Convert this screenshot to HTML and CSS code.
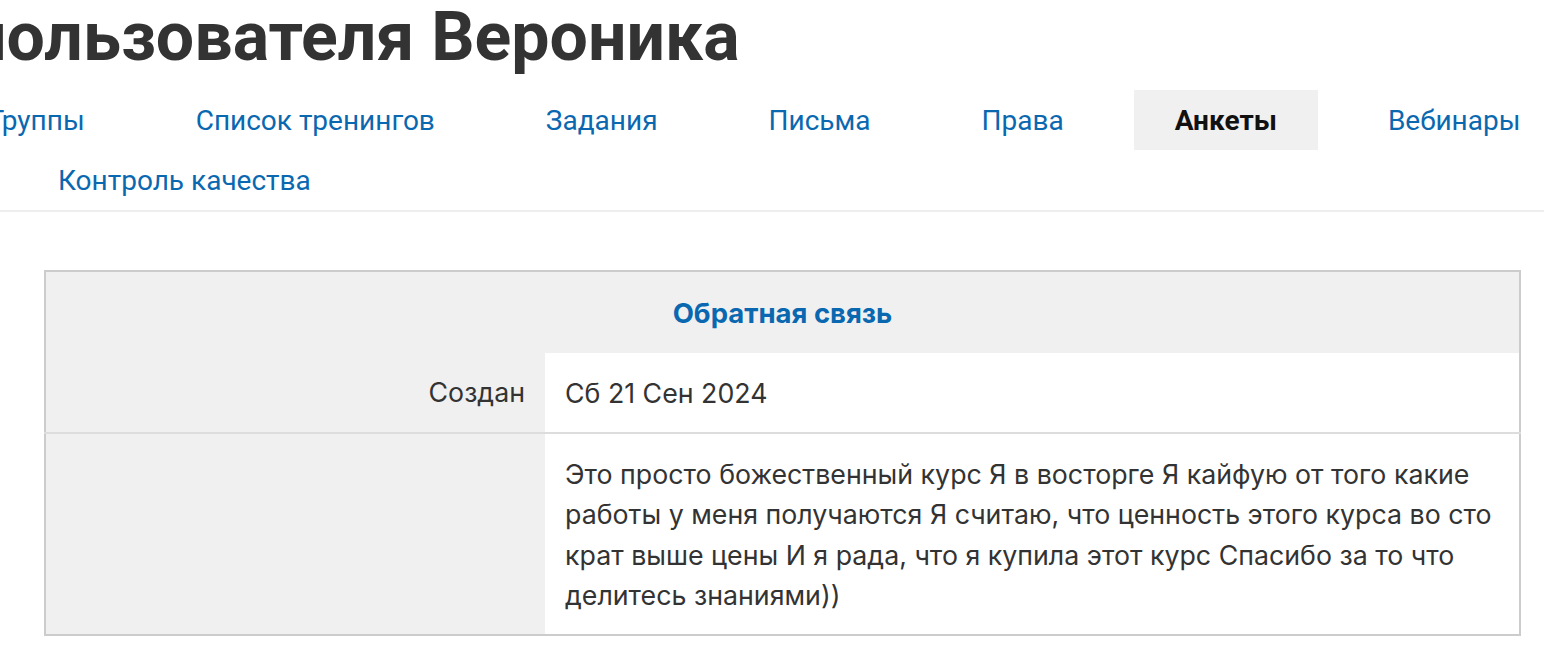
FILE: index.html
```html
<!DOCTYPE html>
<html>
<head>
<meta http-equiv="Content-Type" content="text/html; charset=utf-8"/>
<title>Анкета пользователя Вероника</title>
<link rel="stylesheet" href="styles.css">
</head>
<body>

<h1 class="page-title">пользователя Вероника</h1>

<div class="tabs">
  <div class="tabs-row first">
    <a class="tab" href="#">Группы</a>
    <a class="tab" href="#">Список тренингов</a>
    <a class="tab" href="#">Задания</a>
    <a class="tab" href="#">Письма</a>
    <a class="tab" href="#">Права</a>
    <span class="tab active">Анкеты</span>
    <a class="tab" href="#">Вебинары</a>
  </div>
  <div class="tabs-row second">
    <a class="tab" href="#">Контроль качества</a>
  </div>
</div>

<div class="content">
  <table class="form-table">
    <tr>
      <th colspan="2" class="form-head"><a href="#">Обратная связь</a></th>
    </tr>
    <tr>
      <td class="label">Создан</td>
      <td class="value">Сб 21 Сен 2024</td>
    </tr>
    <tr class="last">
      <td class="label"></td>
      <td class="value">Это просто божественный курс Я в восторге Я кайфую от того какие работы у меня получаются Я считаю, что ценность этого курса во сто крат выше цены И я рада, что я купила этот курс Спасибо за то что делитесь знаниями))</td>
    </tr>
  </table>
</div>

</body>
</html>
```

FILE: styles.css
```css
html, body {
  margin: 0;
  padding: 0;
  background: white;
  overflow: hidden;
}

body {
  font-family: Roboto, "Liberation Sans", sans-serif;
  color: #333;
}

a {
  color: #0a68b0;
  text-decoration: none;
}

.page-title {
  margin: 0 0 0 -32px;
  height: 90px;
  line-height: 74px;
  font-size: 68px;
  font-weight: bold;
  color: #333;
  white-space: nowrap;
}

.tabs {
  border-bottom: 2px solid #eee;
}

.tabs-row {
  display: flex;
  white-space: nowrap;
}
.tabs-row.first {
  margin-left: -52px;
}
.tabs-row.second {
  margin-left: 17px;
}

.tab {
  display: block;
  height: 60px;
  line-height: 62px;
  padding: 0 41px;
  margin-right: 29px;
  font-size: 28px;
}

.tab.active {
  background: #f0f0f0;
  color: #111;
  font-weight: bold;
}

.content {
  padding: 58px 23px 0 44px;
}

.form-table {
  width: 100%;
  border-collapse: collapse;
  border: 2px solid #ccc;
  font-family: Inter, "Noto Sans", sans-serif;
  font-size: 26.75px;
  color: #333;
}

.form-head {
  background: #f0f0f0;
  height: 79px;
  text-align: center;
  font-weight: bold;
  font-size: 27.5px;
}

.form-table td {
  border-bottom: 2px solid #ddd;
  vertical-align: middle;
}

.form-table tr.last td {
  border-bottom: none;
}

.label {
  width: 479px;
  background: #f0f0f0;
  text-align: right;
  padding: 0 20px 0 0;
  height: 78px;
}

.value {
  background: white;
  padding: 20px 20px 18px 20px;
  line-height: 40.5px;
}
```
